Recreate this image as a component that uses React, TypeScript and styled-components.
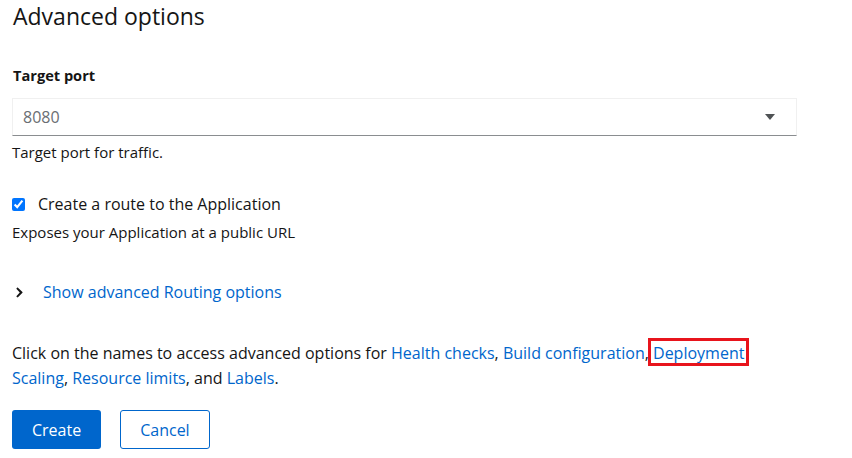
import React from "react";
import styled, { createGlobalStyle } from "styled-components";

const GlobalStyle = createGlobalStyle`
  html, body { margin: 0; padding: 0; background: #ffffff; }
  body {
    font-family: "Open Sans", "Liberation Sans", sans-serif;
    color: #151515;
    -webkit-font-smoothing: antialiased;
  }
  * { box-sizing: border-box; }
`;

const Page = styled.div`
  width: 797px;
  padding-left: 12px;
  display: flex;
  flex-direction: column;
`;

const Title = styled.h1`
  margin: 0;
  font-size: 23px;
  line-height: 32px;
  font-weight: 400;
  padding-left: 1px;
`;

const Group = styled.div<{ $mt: number }>`
  margin-top: ${(p) => p.$mt}px;
  display: flex;
  flex-direction: column;
`;

const Label = styled.label`
  font-size: 14.6px;
  line-height: 21px;
  font-weight: 700;
  padding-left: 1px;
`;

const SelectBox = styled.div`
  margin-top: 12px;
  height: 38px;
  display: flex;
  align-items: center;
  justify-content: space-between;
  padding: 0 21px 0 10px;
  border: 1px solid #f0f0f0;
  border-bottom-color: #8a8d90;
  font-size: 16px;
  color: #6a6e73;
`;

const Helper = styled.div<{ $mt?: number }>`
  margin-top: ${(p) => p.$mt ?? 6}px;
  font-size: 15px;
  line-height: 21px;
  color: #151515;
`;

const CheckRow = styled.label`
  display: flex;
  align-items: center;
  gap: 13px;
  font-size: 16px;
  line-height: 24px;
`;

const Check = styled.input`
  margin: 0;
  width: 13px;
  height: 13px;
  accent-color: #0075ff;
`;

const Toggle = styled.button`
  display: flex;
  align-items: center;
  padding: 0;
  border: 0;
  background: none;
  font-family: inherit;
  font-size: 16px;
  line-height: 24px;
  color: #0066cc;
  cursor: pointer;
  text-align: left;
`;

const ToggleIcon = styled.span`
  width: 31px;
  display: flex;
  justify-content: flex-start;
  padding-left: 4px;
  color: #151515;
`;

const Para = styled.p`
  margin: 37px 0 0;
  font-size: 16px;
  line-height: 25px;
`;

const Link = styled.a`
  color: #0066cc;
  text-decoration: none;
`;

const Marked = styled.span`
  position: relative;
  &::after {
    content: "";
    position: absolute;
    left: -5px;
    right: -5px;
    top: -4px;
    bottom: -2px;
    border: 3px solid #e8141c;
    pointer-events: none;
  }
`;

const Actions = styled.div`
  margin-top: 19px;
  display: flex;
  gap: 19px;
`;

const Button = styled.button<{ $primary?: boolean }>`
  height: 39px;
  padding: 0 ${(p) => (p.$primary ? 20 : 19)}px;
  border-radius: 3px;
  font-family: inherit;
  font-size: 16px;
  cursor: pointer;
  background: ${(p) => (p.$primary ? "#0066cc" : "#ffffff")};
  color: ${(p) => (p.$primary ? "#ffffff" : "#0066cc")};
  border: ${(p) => (p.$primary ? "0" : "1px solid #0066cc")};
`;

export default function App() {
  return (
    <>
      <GlobalStyle />
      <Page>
        <Title>Advanced options</Title>
        <Group $mt={33}>
          <Label>Target port</Label>
          <SelectBox>
            <span>8080</span>
            <svg width="10" height="6" viewBox="0 0 10 6">
              <path d="M0 0 L10 0 L5 6 Z" fill="#4f5255" />
            </svg>
          </SelectBox>
          <Helper>Target port for traffic.</Helper>
        </Group>
        <Group $mt={29}>
          <CheckRow>
            <Check type="checkbox" defaultChecked />
            Create a route to the Application
          </CheckRow>
          <Helper>Exposes your Application at a public URL</Helper>
        </Group>
        <Group $mt={37}>
          <Toggle>
            <ToggleIcon>
              <svg width="7" height="11" viewBox="0 0 256 448">
                <path
                  fill="#151515"
                  d="M238 239L55 421c-9 9-25 9-34 0L-1 399c-9-9-9-25 0-34l130-141L-1 84c-9-9-9-25 0-34L21 28c9-9 25-9 34 0l183 177c9 9 9 25 0 34z"
                  transform="translate(10 0)"
                />
              </svg>
            </ToggleIcon>
            Show advanced Routing options
          </Toggle>
        </Group>
        <Para>
          Click on the names to access advanced options for{" "}
          <Link href="#">Health checks</Link>, <Link href="#">Build configuration</Link>,{" "}
          <Marked>
            <Link href="#">Deployment</Link>
          </Marked>{" "}
          <Link href="#">Scaling</Link>, <Link href="#">Resource limits</Link>, and{" "}
          <Link href="#">Labels</Link>.
        </Para>
        <Actions>
          <Button $primary>Create</Button>
          <Button>Cancel</Button>
        </Actions>
      </Page>
    </>
  );
}
